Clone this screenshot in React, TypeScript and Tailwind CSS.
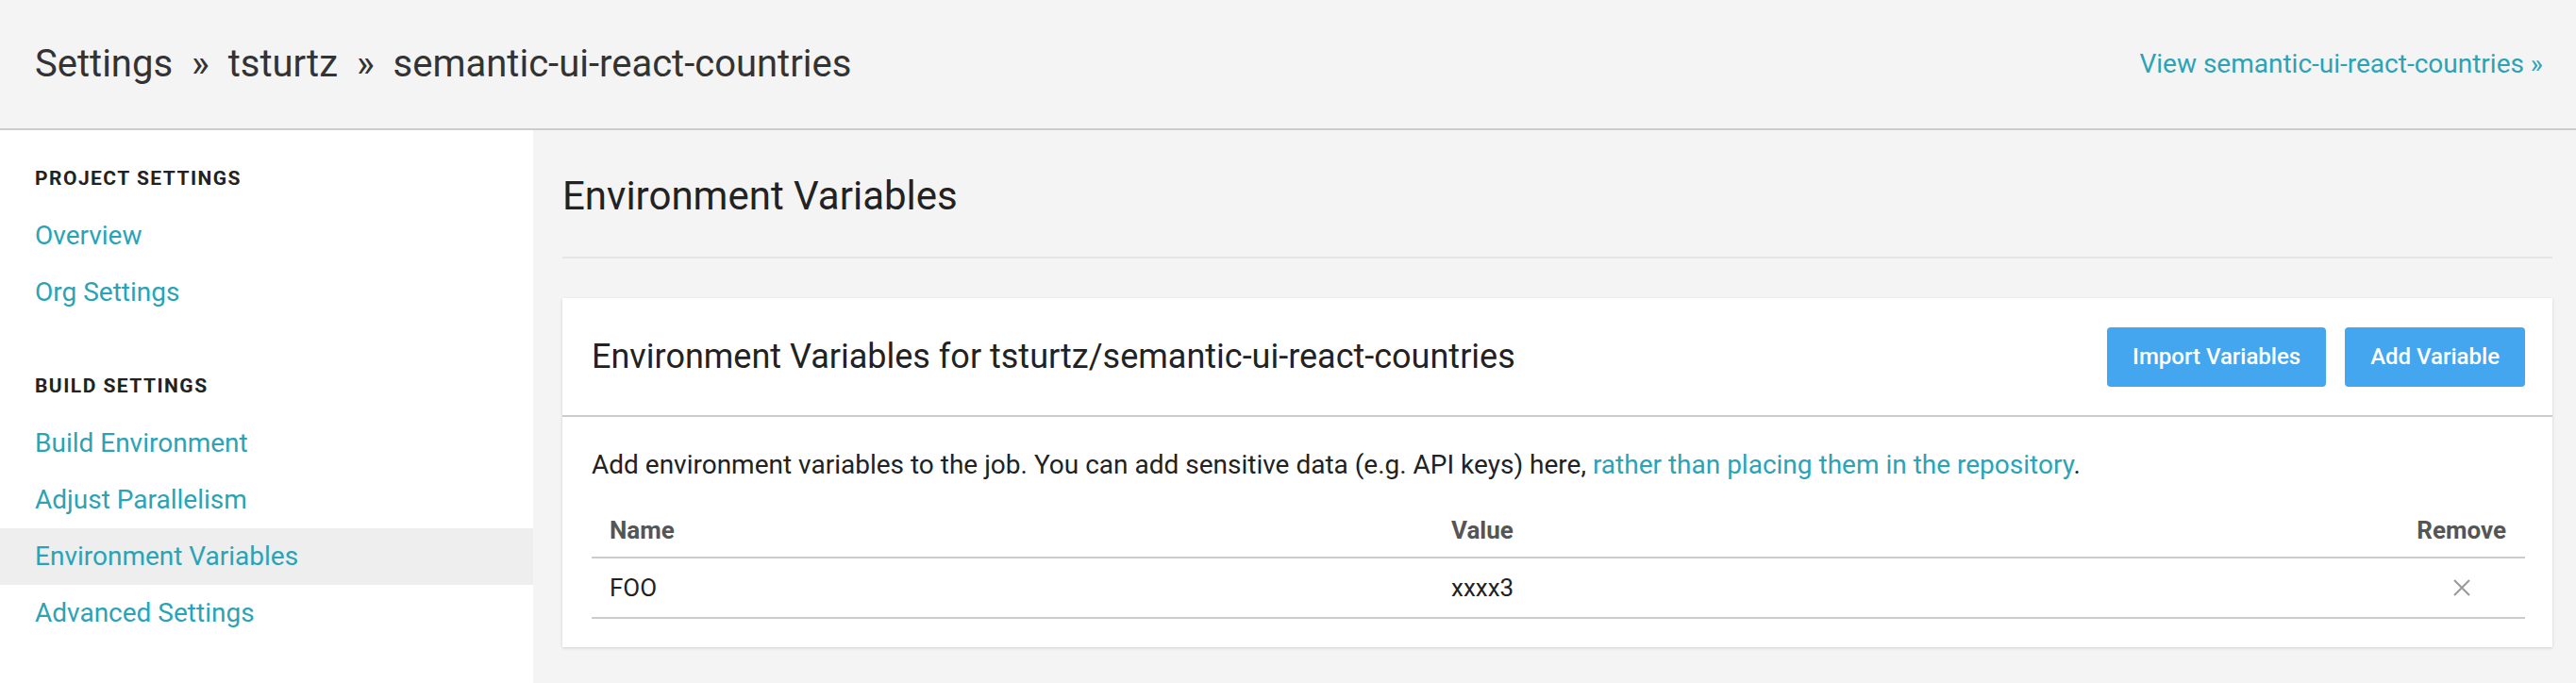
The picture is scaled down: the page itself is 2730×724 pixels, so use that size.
const PROJECT_NAV = ["Overview", "Org Settings"];
const BUILD_NAV = ["Build Environment", "Adjust Parallelism", "Environment Variables", "Advanced Settings"];
const ACTIVE = "Environment Variables";

function NavItem({ label }: { label: string }) {
  const active = label === ACTIVE;
  return (
    <a
      href="#"
      className={
        active
          ? "flex h-[60px] items-center bg-[#eeeeee] px-[37px] text-[28px] text-[#2ba3b6]"
          : "flex h-[60px] items-center px-[37px] text-[28px] text-[#2ba3b6]"
      }
    >
      {label}
    </a>
  );
}

function SectionTitle({ children }: { children: React.ReactNode }) {
  return (
    <div className="flex h-[60px] items-center px-[37px] text-[21px] font-bold uppercase tracking-[0.07em] text-[#222]">
      {children}
    </div>
  );
}

export default function App() {
  return (
    <div className="flex min-h-screen flex-col font-['Roboto',sans-serif] text-[#333]">
      <header className="flex h-[138px] items-center justify-between border-b-2 border-[#cccccc] bg-[#f4f4f4] pl-[37px] pr-[35px]">
        <h1 className="text-[40px] text-[#333]">
          Settings <span className="mx-[10px]">»</span> tsturtz <span className="mx-[10px]">»</span> semantic-ui-react-countries
        </h1>
        <a href="#" className="text-[28px] text-[#2ba3b6]">
          View semantic-ui-react-countries »
        </a>
      </header>

      <div className="flex flex-1">
        <aside className="w-[565px] shrink-0 bg-white pt-[22px]">
          <SectionTitle>Project Settings</SectionTitle>
          {PROJECT_NAV.map((l) => (
            <NavItem key={l} label={l} />
          ))}
          <div className="mt-[40px]">
            <SectionTitle>Build Settings</SectionTitle>
          </div>
          {BUILD_NAV.map((l) => (
            <NavItem key={l} label={l} />
          ))}
        </aside>

        <main className="flex-1 bg-[#f4f4f4] pl-[31px] pr-[25px] pt-[39px]">
          <h2 className="flex h-[60px] items-center text-[42px] text-[#222]">Environment Variables</h2>
          <div className="mt-[35px] h-[2px] bg-[#e5e5e5]" />

          <section className="mt-[42px] bg-white shadow-[0_1px_3px_rgba(0,0,0,0.15)]">
            <div className="flex h-[126px] items-center justify-between border-b-2 border-[#cccccc] pl-[31px] pr-[29px]">
              <h3 className="text-[36px] text-[#222]">Environment Variables for tsturtz/semantic-ui-react-countries</h3>
              <div className="flex gap-[20px]">
                <button className="h-[63px] rounded-[4px] bg-[#44a6ee] px-[27px] text-[24px] font-medium text-white">
                  Import Variables
                </button>
                <button className="h-[63px] rounded-[4px] bg-[#44a6ee] px-[27px] text-[24px] font-medium text-white">
                  Add Variable
                </button>
              </div>
            </div>

            <div className="pb-[30px] pl-[31px] pr-[29px] pt-[33px]">
              <p className="text-[28px] leading-[36px] text-[#222]">
                Add environment variables to the job. You can add sensitive data (e.g. API keys) here,{" "}
                <a href="#" className="text-[#2ba3b6]">
                  rather than placing them in the repository
                </a>
                .
              </p>

              <div className="mt-[23px] grid grid-cols-[892px_1fr_auto]">
                <div className="flex h-[58px] items-center border-b-2 border-[#cccccc] px-[19px] text-[26px] font-bold text-[#555]">Name</div>
                <div className="flex h-[58px] items-center border-b-2 border-[#cccccc] px-[19px] text-[26px] font-bold text-[#555]">Value</div>
                <div className="flex h-[58px] items-center justify-end border-b-2 border-[#cccccc] px-[20px] text-[26px] font-bold text-[#555]">Remove</div>

                <div className="flex h-[64px] items-center border-b-2 border-[#cccccc] px-[19px] text-[26px] text-[#222]">FOO</div>
                <div className="flex h-[64px] items-center border-b-2 border-[#cccccc] px-[19px] text-[26px] text-[#222]">xxxx3</div>
                <div className="flex h-[64px] items-center justify-center border-b-2 border-[#cccccc] px-[20px]">
                  <button aria-label="Remove" className="flex items-center justify-center">
                    <svg width="20" height="20" viewBox="0 0 20 20" fill="none" stroke="#999" strokeWidth="2">
                      <path d="M2 2L18 18M18 2L2 18" />
                    </svg>
                  </button>
                </div>
              </div>
            </div>
          </section>
        </main>
      </div>
    </div>
  );
}
